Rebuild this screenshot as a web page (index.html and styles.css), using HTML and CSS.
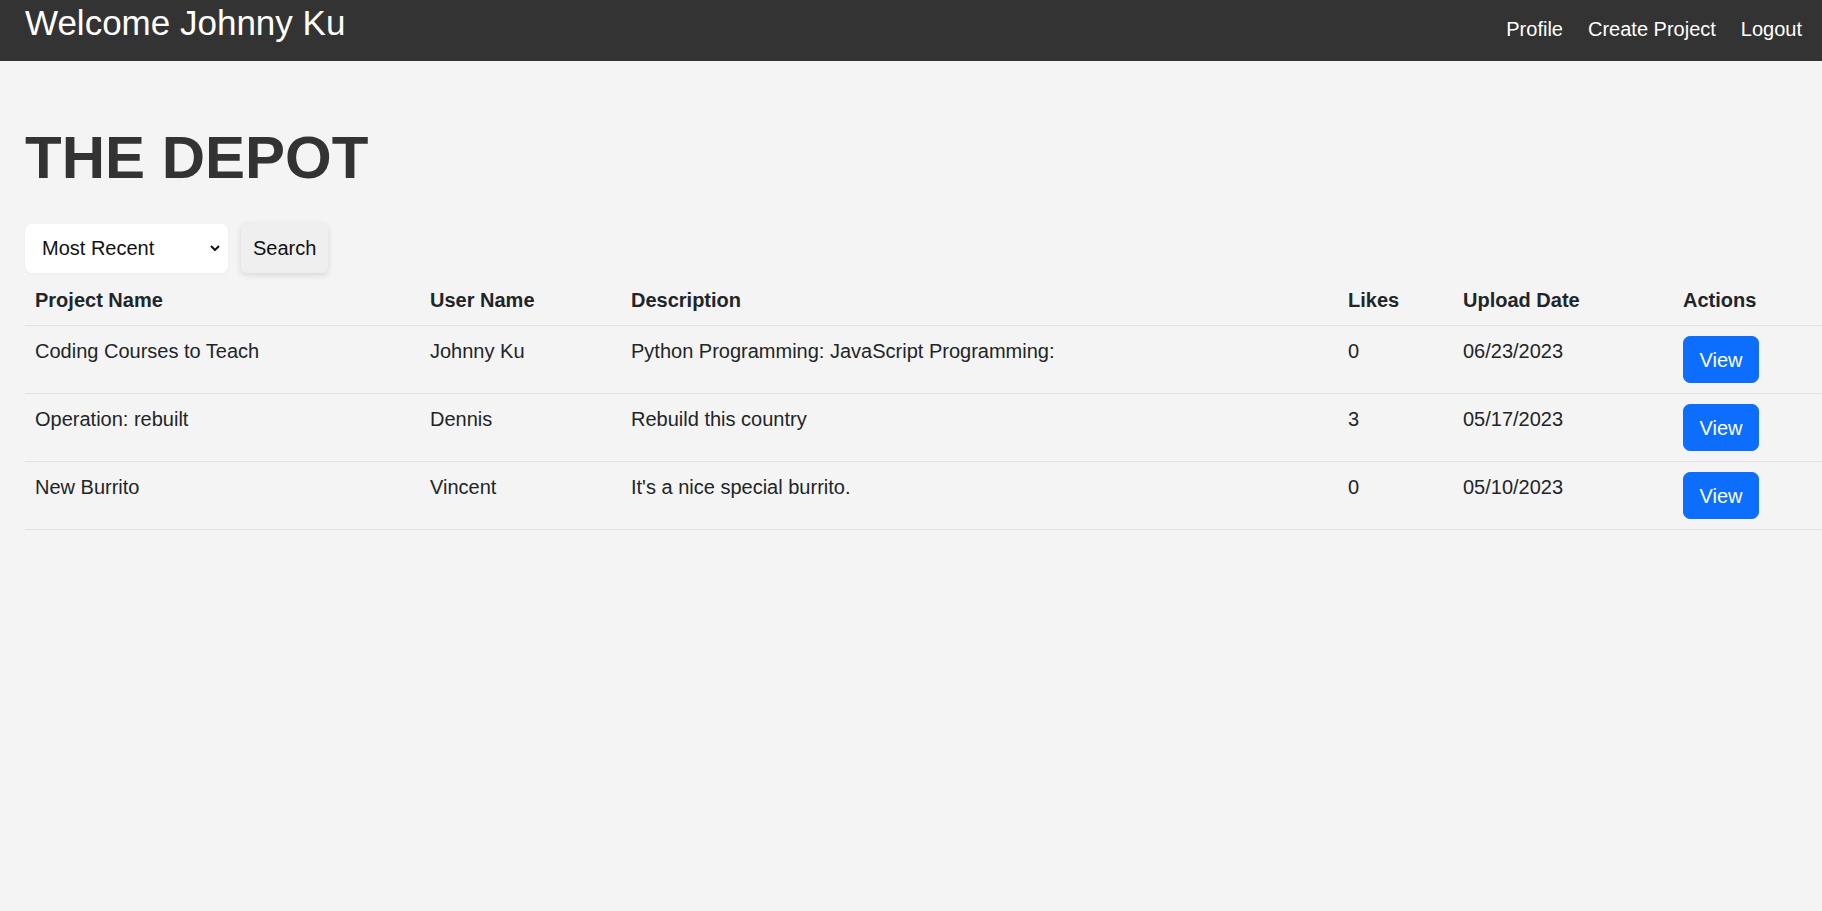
FILE: index.html
```html
<!DOCTYPE html>
<html lang="en">
<head>
<meta charset="utf-8">
<title>The Depot</title>
<link rel="stylesheet" href="styles.css">
</head>
<body>
<header class="topbar">
  <h1 class="welcome">Welcome Johnny Ku</h1>
  <nav class="nav">
    <a class="nav-link" href="#">Profile</a>
    <a class="nav-link" href="#">Create Project</a>
    <a class="nav-link" href="#">Logout</a>
  </nav>
</header>
<main class="page">
  <h1 class="title">THE DEPOT</h1>
  <form class="filter">
    <div class="select-wrap">
      <select class="sort-select">
        <option>Most Recent</option>
        <option>Most Liked</option>
      </select>
      <svg class="chevron" width="10" height="6" viewBox="0 0 10 6"><path d="M1 1 L5 5 L9 1" fill="none" stroke="#111" stroke-width="2"/></svg>
    </div>
    <button type="button" class="search-btn">Search</button>
  </form>
  <table class="projects">
    <thead>
      <tr>
        <th class="c-name">Project Name</th>
        <th class="c-user">User Name</th>
        <th class="c-desc">Description</th>
        <th class="c-likes">Likes</th>
        <th class="c-date">Upload Date</th>
        <th class="c-act">Actions</th>
      </tr>
    </thead>
    <tbody>
      <tr>
        <td>Coding Courses to Teach</td>
        <td>Johnny Ku</td>
        <td>Python Programming: JavaScript Programming:</td>
        <td>0</td>
        <td>06/23/2023</td>
        <td><a class="view-btn" href="#">View</a></td>
      </tr>
      <tr>
        <td>Operation: rebuilt</td>
        <td>Dennis</td>
        <td>Rebuild this country</td>
        <td>3</td>
        <td>05/17/2023</td>
        <td><a class="view-btn" href="#">View</a></td>
      </tr>
      <tr>
        <td>New Burrito</td>
        <td>Vincent</td>
        <td>It's a nice special burrito.</td>
        <td>0</td>
        <td>05/10/2023</td>
        <td><a class="view-btn" href="#">View</a></td>
      </tr>
    </tbody>
  </table>
</main>
</body>
</html>
```

FILE: styles.css
```css
* { box-sizing: border-box; }

html, body {
  margin: 0;
  padding: 0;
}

body {
  background: #f4f4f4;
  color: #212529;
  font-family: "Liberation Sans", Arial, sans-serif;
  font-size: 20px;
  line-height: 1.5;
}

.topbar {
  height: 61px;
  background: #333333;
  color: #ffffff;
  display: flex;
  justify-content: space-between;
  align-items: flex-start;
  padding: 0 20px 0 25px;
}

.welcome {
  margin: 2px 0 0;
  font-size: 35px;
  font-weight: 400;
  line-height: 42px;
}

.nav {
  display: flex;
  gap: 25px;
  padding-top: 18px;
}

.nav-link {
  color: #ffffff;
  text-decoration: none;
  font-size: 20px;
  line-height: 23px;
}

.page {
  padding: 61px 0 0 25px;
}

.title {
  margin: 0 0 27px;
  font-size: 60px;
  font-weight: 700;
  line-height: 72px;
  color: #333333;
}

.filter {
  display: flex;
  align-items: center;
  gap: 13px;
  height: 54px;
  margin-bottom: 0;
}

.select-wrap {
  position: relative;
  width: 203px;
  height: 49px;
}

.sort-select {
  appearance: none;
  -webkit-appearance: none;
  width: 100%;
  height: 100%;
  border: none;
  border-radius: 7px;
  background: #ffffff;
  font-family: "Liberation Sans", Arial, sans-serif;
  font-size: 20px;
  color: #111111;
  padding: 0 30px 0 17px;
  box-shadow: 0 1px 3px rgba(0, 0, 0, 0.04);
}

.chevron {
  position: absolute;
  right: 8px;
  top: 21px;
  pointer-events: none;
}

.search-btn {
  height: 50px;
  padding: 0 12px;
  border: none;
  border-radius: 6px;
  background: #efefef;
  color: #111111;
  font-family: "Liberation Sans", Arial, sans-serif;
  font-size: 20px;
  box-shadow: 0 2px 6px rgba(0, 0, 0, 0.12);
}

.projects {
  width: 100%;
  border-collapse: collapse;
  table-layout: fixed;
}

.projects th,
.projects td {
  text-align: left;
  vertical-align: top;
  padding: 10px;
  line-height: 30px;
  border-bottom: 1px solid #dee2e6;
}

.projects th { font-weight: 700; }

.c-name { width: 395px; }
.c-user { width: 201px; }
.c-desc { width: 717px; }
.c-likes { width: 115px; }
.c-date { width: 220px; }
.c-act { width: 149px; }

.view-btn {
  display: inline-block;
  padding: 7.5px 15.5px;
  border: 1px solid #0d6efd;
  border-radius: 7px;
  background: #0d6efd;
  color: #ffffff;
  text-decoration: none;
  font-size: 20px;
  line-height: 30px;
}
```
